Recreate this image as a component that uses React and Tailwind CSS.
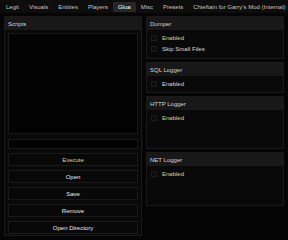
import React from "react";

const tabs = ["Legit", "Visuals", "Entities", "Players", "Glua", "Misc", "Presets", "Chieftain for Garry's Mod (Internal)"];

const Panel = ({ title, className, children }) => (
  <div className={`flex flex-col border border-[#1a1a1a] bg-[#090909] ${className}`}>
    <div className="flex h-[13px] shrink-0 items-center bg-[#181818] px-[3px] text-[#d4d4d4]">{title}</div>
    {children}
  </div>
);

const Check = ({ label, on }) => (
  <div className="flex h-[11px] items-center gap-[5px] pl-[4px]">
    <div className="h-[6px] w-[6px] border border-[#1c1c1c] bg-[#0c0c0c]" />
    <span className={on ? "text-[#ddd48a]" : "text-[#dadada]"}>{label}</span>
  </div>
);

const Button = ({ label, hot }) => (
  <div
    className={`flex h-[13px] items-center justify-center border border-[#1a1a1a] bg-[#080808] ${
      hot ? "text-[#ddd48a]" : "text-[#ececec]"
    }`}
  >
    {label}
  </div>
);

export default function App() {
  return (
    <div className="h-[240px] w-[288px] overflow-hidden bg-[#050505] font-['Liberation_Sans',Arial,sans-serif] text-[6px] leading-none">
      {/* tab strip */}
      <div className="flex h-[13px] items-center bg-[#0d0d0d] pl-[1px]">
        {tabs.map((t) => (
          <div
            key={t}
            className={`flex h-[10px] items-center whitespace-nowrap px-[5px] ${
              t === "Glua" ? "bg-[#262626] text-white" : "text-[#c4c4c4]"
            }`}
          >
            {t}
          </div>
        ))}
      </div>

      <div className="flex gap-[4px] px-[4px] pt-[3px]">
        {/* scripts */}
        <Panel title="Scripts" className="h-[220px] w-[138px]">
          <div className="flex flex-1 flex-col px-[3px] pt-[3px]">
            <div className="h-[101px] border border-[#181818] bg-[#030303]" />
            <div className="mt-[5px] h-[10px] border border-[#181818] bg-[#030303]" />
            <div className="mt-[4px] flex flex-col gap-[4px]">
              <Button label="Execute" hot />
              <Button label="Open" />
              <Button label="Save" />
              <Button label="Remove" />
              <Button label="Open Directory" />
            </div>
          </div>
        </Panel>

        {/* loggers */}
        <div className="flex w-[138px] flex-col gap-[3px]">
          <Panel title="Dumper" className="h-[43px]">
            <div className="pt-[2px]">
              <Check label="Enabled" on />
              <Check label="Skip Small Files" />
            </div>
          </Panel>
          <Panel title="SQL Logger" className="h-[31px]">
            <div className="pt-[2px]">
              <Check label="Enabled" />
            </div>
          </Panel>
          <Panel title="HTTP Logger" className="h-[53px]">
            <div className="pt-[2px]">
              <Check label="Enabled" on />
            </div>
          </Panel>
          <Panel title="NET Logger" className="h-[54px]">
            <div className="pt-[2px]">
              <Check label="Enabled" on />
            </div>
          </Panel>
        </div>
      </div>
    </div>
  );
}
